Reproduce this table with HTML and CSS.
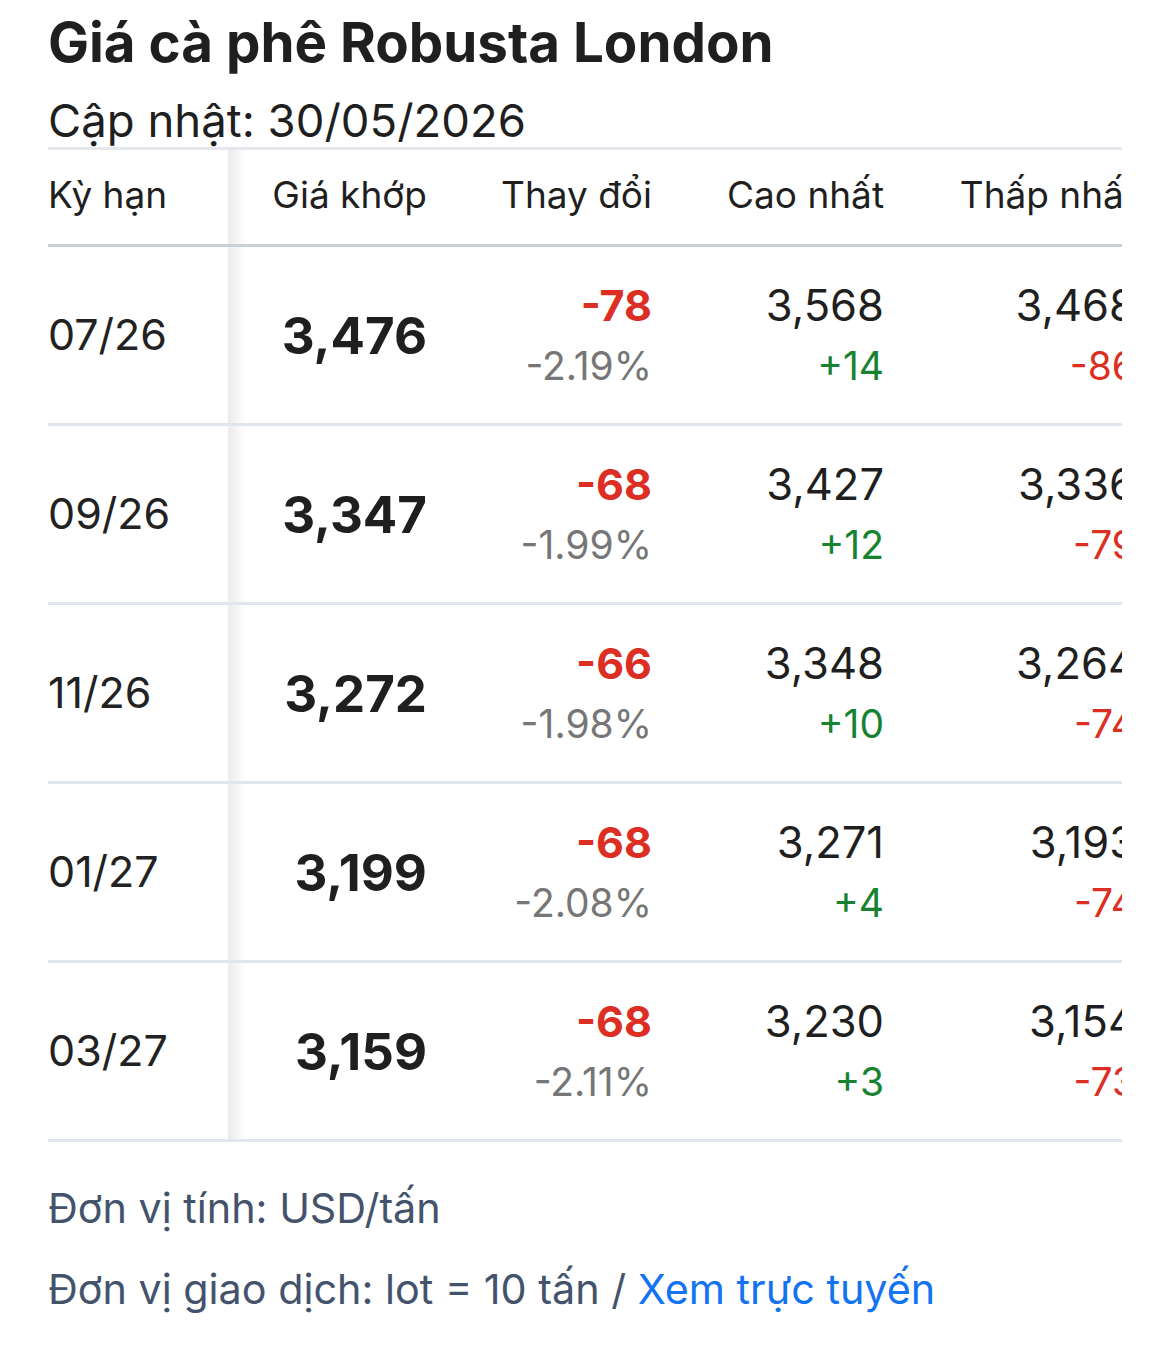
FILE: index.html
```html
<!DOCTYPE html>
<html lang="vi">
<head>
<meta charset="utf-8">
<title>Giá cà phê Robusta London</title>
<link rel="stylesheet" href="styles.css">
</head>
<body>
<main class="page">
  <h1 class="title">Giá cà phê Robusta London</h1>
  <p class="updated">Cập nhật: 30/05/2026</p>
  <div class="table-wrap">
    <table class="prices">
      <colgroup>
        <col class="w-term">
        <col class="w-price">
        <col class="w-change">
        <col class="w-high">
        <col class="w-low">
      </colgroup>
      <thead>
        <tr>
          <th class="c-term">Kỳ hạn</th>
          <th class="c-price">Giá khớp</th>
          <th class="c-num">Thay đổi</th>
          <th class="c-num">Cao nhất</th>
          <th class="c-num">Thấp nhất</th>
        </tr>
      </thead>
      <tbody>
        <tr>
          <td class="c-term">07/26</td>
          <td class="c-price"><span class="price">3,476</span></td>
          <td class="c-num"><div class="main red bold">-78</div><div class="sub grey">-2.19%</div></td>
          <td class="c-num"><div class="main">3,568</div><div class="sub green">+14</div></td>
          <td class="c-num"><div class="main">3,468</div><div class="sub red">-86</div></td>
        </tr>
        <tr>
          <td class="c-term">09/26</td>
          <td class="c-price"><span class="price">3,347</span></td>
          <td class="c-num"><div class="main red bold">-68</div><div class="sub grey">-1.99%</div></td>
          <td class="c-num"><div class="main">3,427</div><div class="sub green">+12</div></td>
          <td class="c-num"><div class="main">3,336</div><div class="sub red">-79</div></td>
        </tr>
        <tr>
          <td class="c-term">11/26</td>
          <td class="c-price"><span class="price">3,272</span></td>
          <td class="c-num"><div class="main red bold">-66</div><div class="sub grey">-1.98%</div></td>
          <td class="c-num"><div class="main">3,348</div><div class="sub green">+10</div></td>
          <td class="c-num"><div class="main">3,264</div><div class="sub red">-74</div></td>
        </tr>
        <tr>
          <td class="c-term">01/27</td>
          <td class="c-price"><span class="price">3,199</span></td>
          <td class="c-num"><div class="main red bold">-68</div><div class="sub grey">-2.08%</div></td>
          <td class="c-num"><div class="main">3,271</div><div class="sub green">+4</div></td>
          <td class="c-num"><div class="main">3,193</div><div class="sub red">-74</div></td>
        </tr>
        <tr>
          <td class="c-term">03/27</td>
          <td class="c-price"><span class="price">3,159</span></td>
          <td class="c-num"><div class="main red bold">-68</div><div class="sub grey">-2.11%</div></td>
          <td class="c-num"><div class="main">3,230</div><div class="sub green">+3</div></td>
          <td class="c-num"><div class="main">3,154</div><div class="sub red">-73</div></td>
        </tr>
      </tbody>
    </table>
  </div>
  <div class="notes">
    <p class="note">Đơn vị tính: USD/tấn</p>
    <p class="note">Đơn vị giao dịch: lot = 10 tấn / <a class="link" href="#">Xem trực tuyến</a></p>
  </div>
</main>
</body>
</html>
```

FILE: styles.css
```css
* { box-sizing: border-box; }
html, body { margin: 0; padding: 0; background: #fff; }
body {
  font-family: Inter, "Noto Sans", "Liberation Sans", sans-serif;
  color: #1f1f1f;
}
.page {
  padding: 12px 48px 0 48px;
}
.title {
  margin: 0;
  font-size: 54.7px;
  font-weight: 700;
  line-height: 60px;
  letter-spacing: 0;
  color: #1f1f1f;
}
.updated {
  margin: 21px 0 0 0;
  font-size: 45.5px;
  line-height: 56px;
  font-weight: 400;
  color: #1f1f1f;
  height: 54px;
}
.table-wrap {
  overflow: hidden;
  width: 100%;
}
.prices {
  border-collapse: collapse;
  table-layout: fixed;
  width: 1090px;
}
.w-term { width: 180px; }
.w-price { width: 247px; }
.w-change { width: 179px; }
.w-high { width: 232px; }
.w-low { width: 252px; }
.prices th, .prices td {
  padding: 0;
  white-space: nowrap;
}
.prices thead tr {
  height: 97px;
  border-top: 3px solid #e5e9ee;
  border-bottom: 3px solid #c9d0d9;
}
.prices th {
  font-size: 37px;
  font-weight: 400;
  color: #1f1f1f;
  vertical-align: middle;
  padding-bottom: 5px;
}
.prices tbody tr {
  height: 179px;
  border-bottom: 3px solid #e1e6ec;
}
.c-term {
  text-align: left;
  position: relative;
  background: #fff;
}
.c-term::after {
  content: "";
  position: absolute;
  top: 0;
  bottom: 0;
  right: -18px;
  width: 18px;
  background: linear-gradient(to right, rgba(0,0,0,0.08), rgba(0,0,0,0));
  pointer-events: none;
}
td.c-term {
  font-size: 43px;
  color: #222;
  padding-bottom: 3px;
}
.prices .c-price {
  text-align: right;
  padding-right: 48px;
}
.price {
  font-size: 51px;
  font-weight: 700;
  color: #1f1f1f;
}
.prices .c-num {
  text-align: right;
  padding-right: 2px;
}
.main {
  font-size: 43.5px;
  line-height: 50px;
  color: #1f1f1f;
}
.main.bold { font-size: 43px; }
.sub {
  font-size: 39px;
  line-height: 50px;
  margin-top: 11px;
}
.bold { font-weight: 700; }
.red { color: #dc2e23; }
.green { color: #178232; }
.grey { color: #767676; }
.notes {
  padding-top: 41px;
}
.note {
  margin: 0;
  font-size: 41.3px;
  line-height: 50px;
  color: #44536c;
}
.note + .note { margin-top: 31px; }
.link {
  color: #1473f0;
  text-decoration: none;
}
```
